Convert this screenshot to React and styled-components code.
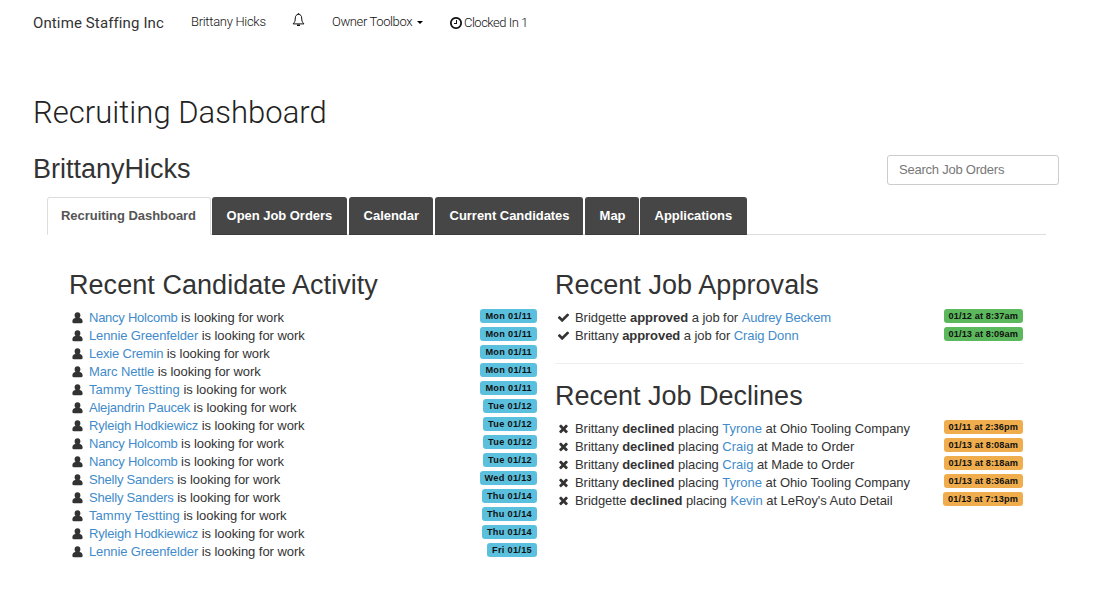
import React from 'react';
import styled, { createGlobalStyle } from 'styled-components';

const GlobalStyle = createGlobalStyle`
  * { box-sizing: border-box; }
  body {
    margin: 0;
    background: #fff;
    color: #333;
    font: 13px/18px "Liberation Sans", Arial, sans-serif;
  }
`;

const Page = styled.div`
  width: 1095px;
  height: 605px;
  overflow: hidden;
`;

const NavBar = styled.nav`
  display: flex;
  align-items: flex-start;
  height: 95px;
  padding-left: 33px;
  font-family: Roboto, "Open Sans", sans-serif;
  color: #111;
`;

const NavItem = styled.span`
  display: flex;
  align-items: center;
  flex: none;
  height: 20px;
  margin-top: ${(p) => p.$top || 12}px;
  width: ${(p) => p.$width}px;
  font-size: ${(p) => p.$size || 13}px;
  font-weight: 300;
  letter-spacing: ${(p) => p.$spacing || 0}px;
  white-space: nowrap;
`;

const Brand = styled(NavItem)`
  font-weight: 400;
  color: #333;
`;

const Caret = styled.span`
  margin-left: 5px;
  margin-top: 1px;
  border-top: 3px solid #000;
  border-left: 3px solid transparent;
  border-right: 3px solid transparent;
`;

const ClockLabel = styled.span`
  margin-left: 1px;
`;

const PageTitle = styled.h1`
  margin: 0 0 0 33px;
  height: 36px;
  font: 300 31px/36px Roboto, "Open Sans", sans-serif;
  color: #222;
  letter-spacing: 0.03px;
  white-space: nowrap;
`;

const UserRow = styled.div`
  display: flex;
  justify-content: space-between;
  align-items: flex-start;
  height: 66px;
  padding: 24px 36px 0 33px;
`;

const Heading = styled.h2`
  margin: 0;
  font-size: 27px;
  font-weight: 400;
  line-height: 30px;
  letter-spacing: ${(p) => p.$spacing || 0}px;
  white-space: nowrap;
`;

const UserHeading = styled(Heading)`
  margin-top: -1px;
`;

const SearchInput = styled.input`
  width: 172px;
  height: 30px;
  padding: 0 11px 1px;
  border: 1px solid #ccc;
  border-radius: 3px;
  background: #fff;
  font: 13px "Liberation Sans", Arial, sans-serif;
  letter-spacing: -0.23px;
  &::placeholder { color: #777; opacity: 1; }
`;

const TabBar = styled.div`
  display: flex;
  height: 38px;
  margin: 0 49px 0 47px;
  box-shadow: inset 0 -1px #ddd;
`;

const Tab = styled.div`
  width: ${(p) => p.$width}px;
  height: 38px;
  margin-right: ${(p) => p.$gap}px;
  padding-left: ${(p) => (p.$active ? 13 : 13.6)}px;
  border: 1px solid ${(p) => (p.$active ? '#ddd' : '#464646')};
  border-bottom-color: ${(p) => (p.$active ? '#fff' : '#3c3a3a')};
  border-radius: 3px 3px 0 0;
  background: ${(p) => (p.$active ? '#fff' : '#464646')};
  color: ${(p) => (p.$active ? '#555' : '#fff')};
  font-weight: 700;
  line-height: 35px;
  letter-spacing: -0.04px;
  white-space: nowrap;
`;

const Columns = styled.div`
  display: flex;
  padding: 35px 0 0 69px;
`;

const Column = styled.section`
  width: 468px;
  margin-right: 18px;
`;

const List = styled.ul`
  list-style: none;
  margin: 0;
  padding: 9px 0 0;
`;

const Row = styled.li`
  display: flex;
  align-items: flex-start;
  height: 18px;
  letter-spacing: -0.06px;
  white-space: nowrap;
`;

const IconSlot = styled.span`
  display: flex;
  flex: none;
  justify-content: center;
  width: 17px;
  height: 18px;
  padding-top: ${(p) => p.$top || 2}px;
  margin-right: 3px;
`;

const Link = styled.a`
  color: #428bca;
  letter-spacing: ${(p) => p.$spacing || 0}px;
`;

const Badge = styled.span`
  margin-left: auto;
  height: 14px;
  padding: 0 5px;
  border-radius: 3px;
  background: ${(p) => p.$color};
  color: #111;
  font-size: 9.2px;
  font-weight: 700;
  line-height: 14px;
  letter-spacing: ${(p) => p.$spacing}px;
`;

const Divider = styled.hr`
  margin: 18px 0 17px;
  border: 0;
  border-top: 1px solid #eee;
`;

const paths = {
  check: 'M1671 566q0 40-28 68l-724 724-136 136q-28 28-68 28t-68-28l-136-136-362-362q-28-28-28-68t28-68l136-136q28-28 68-28t68 28l294 295 656-657q28-28 68-28t68 28l136 136q28 28 28 68z',
  times: 'M1490 1322q0 40-28 68l-136 136q-28 28-68 28t-68-28l-294-294-294 294q-28 28-68 28t-68-28l-136-136q-28-28-28-68t28-68l294-294-294-294q-28-28-28-68t28-68l136-136q28-28 68-28t68 28l294 294 294-294q28-28 68-28t68 28l136 136q28 28 28 68t-28 68l-294 294 294 294q28 28 28 68z',
  clock: 'M1024 544v448q0 14-9 23t-23 9h-320q-14 0-23-9t-9-23v-64q0-14 9-23t23-9h224v-352q0-14 9-23t23-9h64q14 0 23 9t9 23zm416 352q0-148-73-273t-198-198-273-73-273 73-198 198-73 273 73 273 198 198 273 73 273-73 198-198 73-273zm224 0q0 209-103 385.5t-279.5 279.5-385.5 103-385.5-103-279.5-279.5-103-385.5 103-385.5 279.5-279.5 385.5-103 385.5 103 279.5 279.5 103 385.5z',
};

const Icon = ({ name, size = 13 }) => (
  <svg width={size} height={size} viewBox="0 0 1792 1792" fill="currentColor">
    <path d={paths[name]} />
  </svg>
);

const PersonIcon = () => (
  <svg width="11" height="12" viewBox="0 0 11 12" fill="currentColor">
    <path d="M5.5 .2c1.800 0 2.900 1.200 2.900 3 0 1.100-.4 2.100-1 2.700C9.400 6.100 10.600 7.300 10.600 9.300v.8c0 .7-.5 1.200-1.200 1.200H1.600c-.7 0-1.200-.5-1.200-1.200v-.8c0-2 1.200-3.200 3.200-3.400-.6-.6-1-1.600-1-2.700C2.600 1.400 3.700 .2 5.500 .2z" />
  </svg>
);

const BellIcon = () => (
  <svg width="13" height="14" viewBox="0 0 13 14" fill="none" stroke="#111">
    <path d="M6.500 1.300C4.300 1.500 3.300 3 3.300 5c0 3-.7 4.600-2.300 5.900h11C10.400 9.600 9.700 8 9.700 5c0-2-1-3.500-3.200-3.700z" strokeWidth="1" />
    <path d="M6.500 .2v1.200M5 12.200h3" strokeWidth="1.400" />
  </svg>
);

const tabs = [
  ['Recruiting Dashboard', 164, 1],
  ['Open Job Orders', 135, 2],
  ['Calendar', 84, 2],
  ['Current Candidates', 148, 2],
  ['Map', 54, 1],
  ['Applications', 107, 0],
];

const nameSpacing = {
  'Nancy Holcomb': -0.25,
  'Lennie Greenfelder': -0.12,
  'Lexie Cremin': -0.2,
  'Marc Nettle': -0.12,
  'Tammy Testting': 0.06,
  'Alejandrin Paucek': -0.22,
  'Ryleigh Hodkiewicz': -0.2,
  'Shelly Sanders': -0.2,
  'Audrey Beckem': -0.2,
  'Craig Donn': -0.1,
};

const activity = [
  ['Nancy Holcomb', 'Mon 01/11'],
  ['Lennie Greenfelder', 'Mon 01/11'],
  ['Lexie Cremin', 'Mon 01/11'],
  ['Marc Nettle', 'Mon 01/11'],
  ['Tammy Testting', 'Mon 01/11'],
  ['Alejandrin Paucek', 'Tue 01/12'],
  ['Ryleigh Hodkiewicz', 'Tue 01/12'],
  ['Nancy Holcomb', 'Tue 01/12'],
  ['Nancy Holcomb', 'Tue 01/12'],
  ['Shelly Sanders', 'Wed 01/13'],
  ['Shelly Sanders', 'Thu 01/14'],
  ['Tammy Testting', 'Thu 01/14'],
  ['Ryleigh Hodkiewicz', 'Thu 01/14'],
  ['Lennie Greenfelder', 'Fri 01/15'],
];

const approvals = [
  ['Bridgette', 'Audrey Beckem', '01/12 at 8:37am'],
  ['Brittany', 'Craig Donn', '01/13 at 8:09am'],
];

const declines = [
  ['Brittany', 'Tyrone', 'Ohio Tooling Company', '01/11 at 2:36pm'],
  ['Brittany', 'Craig', 'Made to Order', '01/13 at 8:08am'],
  ['Brittany', 'Craig', 'Made to Order', '01/13 at 8:18am'],
  ['Brittany', 'Tyrone', 'Ohio Tooling Company', '01/13 at 8:36am'],
  ['Bridgette', 'Kevin', "LeRoy's Auto Detail", '01/13 at 7:13pm'],
];

export default function App() {
  return (
    <Page>
      <GlobalStyle />
      <NavBar>
        <Brand $width={158} $top={13} $size={15} $spacing={0.12}>Ontime Staffing Inc</Brand>
        <NavItem $width={101} $spacing={-0.3}>Brittany Hicks</NavItem>
        <NavItem $width={40} $top={10}><BellIcon /></NavItem>
        <NavItem $width={117} $spacing={-0.38}>Owner Toolbox<Caret /></NavItem>
        <NavItem $width={90} $top={13} $spacing={-0.5}>
          <Icon name="clock" size={14} />
          <ClockLabel>Clocked In 1</ClockLabel>
        </NavItem>
      </NavBar>
      <PageTitle>Recruiting Dashboard</PageTitle>
      <UserRow>
        <UserHeading>BrittanyHicks</UserHeading>
        <SearchInput placeholder="Search Job Orders" />
      </UserRow>
      <TabBar>
        {tabs.map(([label, width, gap], i) => (
          <Tab key={label} $active={i === 0} $width={width} $gap={gap}>{label}</Tab>
        ))}
      </TabBar>
      <Columns>
        <Column>
          <Heading $spacing={0.05}>Recent Candidate Activity</Heading>
          <List>
            {activity.map(([name, date], i) => (
              <Row key={i}>
                <IconSlot $top={3}><PersonIcon /></IconSlot>
                <span><Link $spacing={nameSpacing[name]}>{name}</Link> is looking for work</span>
                <Badge $color="#5bc0de" $spacing={0.3}>{date}</Badge>
              </Row>
            ))}
          </List>
        </Column>
        <Column>
          <Heading $spacing={0.06}>Recent Job Approvals</Heading>
          <List>
            {approvals.map(([who, name, date]) => (
              <Row key={date}>
                <IconSlot><Icon name="check" /></IconSlot>
                <span>{who} <b>approved</b> a job for <Link $spacing={nameSpacing[name]}>{name}</Link></span>
                <Badge $color="#5cb85c" $spacing={0.1}>{date}</Badge>
              </Row>
            ))}
          </List>
          <Divider />
          <Heading>Recent Job Declines</Heading>
          <List>
            {declines.map(([who, name, place, date]) => (
              <Row key={date}>
                <IconSlot><Icon name="times" /></IconSlot>
                <span>{who} <b>declined</b> placing <Link>{name}</Link> at {place}</span>
                <Badge $color="#f0ad4e" $spacing={0.1}>{date}</Badge>
              </Row>
            ))}
          </List>
        </Column>
      </Columns>
    </Page>
  );
}
